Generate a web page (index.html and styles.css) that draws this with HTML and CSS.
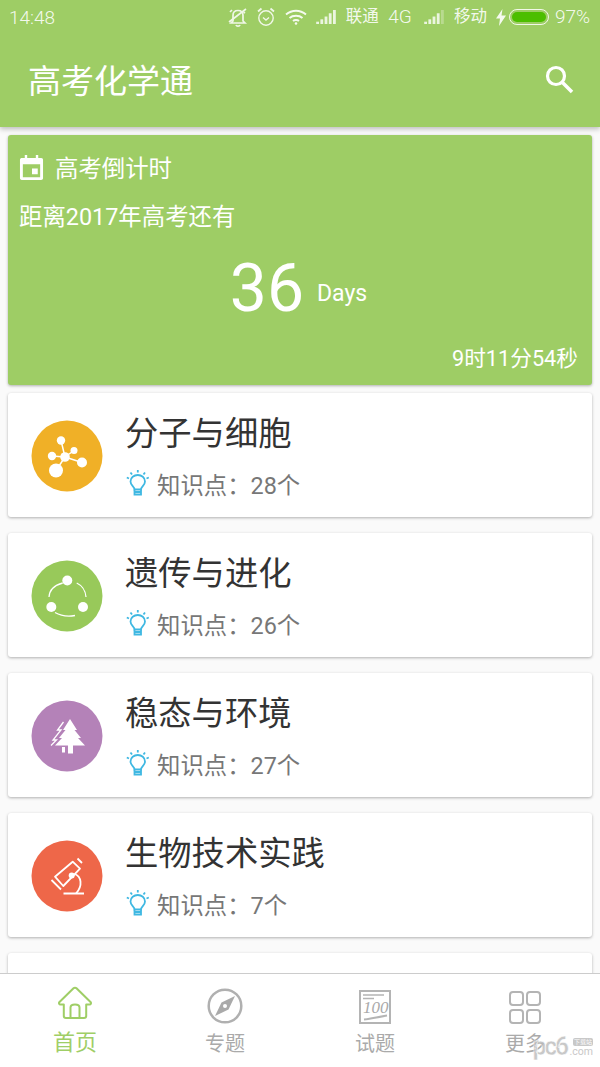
FILE: index.html
```html
<!DOCTYPE html>
<html lang="zh-CN">
<head>
  <meta charset="UTF-8">
  <title>高考化学通</title>
  <meta name="viewport" content="width=device-width, initial-scale=1.0">
  <link rel="stylesheet" href="styles.css">
</head>
<body>

  <div class="app">
    <header class="top">
      <div class="status">
        <span class="clock">14:48</span>
        <div class="status-right">
          <svg class="st-bell" width="20" height="22" viewBox="0 0 20 22" fill="none" stroke="#fff" stroke-width="1.7" opacity=".85"><path d="M5 15V9.500C5 6.500 7 4.500 10 4.500C13 4.500 15 6.500 15 9.500V15L17 17H3Z"/><path d="M8 19C8.500 20.500 11.500 20.500 12 19" /><path d="M1 16L18 3"/><path d="M2 6L4 4M17 7L15.500 6"/></svg>
          <svg class="st-alarm" width="18" height="20" viewBox="0 0 18 20" fill="none" stroke="#fff" stroke-width="1.4" opacity=".85"><circle cx="9" cy="11" r="7.200"/><path d="M6 10.500L9 13L12 10.500"/><path d="M1 4.500L4.500 1.500M17 4.500L13.500 1.500" stroke-width="1.800"/></svg>
          <svg class="st-wifi" width="22" height="16" viewBox="0 0 22 16" fill="none" stroke="#fff" stroke-width="2" opacity=".9"><path d="M1 5.500C7 .5 15 .5 21 5.500"/><path d="M4.500 9C8 6 14 6 17.500 9"/><path d="M8 12C9.500 10.800 12.500 10.800 14 12"/><circle cx="11" cy="14.500" r="1.300" fill="#fff" stroke="none"/></svg>
          <svg class="st-signal" width="20" height="14" viewBox="0 0 21 15" fill="#fff" opacity=".8"><rect x="0" y="12.500" width="3" height="2.500"/><rect x="4.500" y="10" width="3" height="5"/><rect x="9" y="7" width="3" height="8"/><rect x="13.500" y="3.500" width="3" height="11.500"/><rect x="18" y="0" width="3" height="15"/></svg>
          <span class="st-text">联通</span>
          <span class="st-latin">4G</span>
          <svg class="st-signal st-signal-two" width="20" height="14" viewBox="0 0 21 15" fill="#fff" opacity=".8"><rect x="0" y="12.500" width="3" height="2.500"/><rect x="4.500" y="10" width="3" height="5"/><rect x="9" y="7" width="3" height="8"/><rect x="13.500" y="3.500" width="3" height="11.500"/><rect x="18" y="0" width="3" height="15" opacity=".35"/></svg>
          <span class="st-text">移动</span>
          <svg class="st-bolt" width="10" height="17" viewBox="0 0 10 17" fill="#fff" opacity=".9"><path d="M6.500 0L0 9.500H4L3 17L10 6.500H5.500Z"/></svg>
          <div class="battery"><div class="battery-fill"></div></div>
          <span class="st-latin st-pct">97%</span>
        </div>
      </div>
      <div class="toolbar">
        <h1>高考化学通</h1>
        <svg class="search" width="30" height="30" viewBox="0 0 30 30" fill="none" stroke="#fff"><circle cx="12" cy="12" r="8.500" stroke-width="3.200"/><path d="M18.500 18.500L28 28" stroke-width="3.600"/></svg>
      </div>
    </header>

    <main class="content">
      <section class="countdown">
        <div class="cd-head">
          <svg class="cd-icon" width="25" height="26" viewBox="0 0 26 27" fill="#fff"><path d="M6 0H8.500V3H17.500V0H20V3H23C24.500 3 25 4 25 5V24C25 25.500 24 26 23 26H3C1.500 26 1 25 1 24V5C1 3.500 2 3 3 3H6ZM4 9.500V23H22V9.500Z"/><rect x="13.500" y="14" width="6" height="6"/></svg>
          <span>高考倒计时</span>
        </div>
        <p class="cd-line">距离2017年高考还有</p>
        <div class="cd-days">
          <span class="cd-num">36</span>
          <span class="cd-unit">Days</span>
        </div>
        <p class="cd-time">9时11分54秒</p>
      </section>

      <section class="card">
        <svg class="topic" width="72" height="72" viewBox="0 0 72 72">
          <circle cx="36" cy="36" r="35.500" fill="#f0b027"/>
          <g stroke="#fff" stroke-width="1.500"><path d="M34 37L30 20.500M34 37L21 36M34 37L43 30.500M34 37L51 42.500M34 37L25 50.500"/></g>
          <g fill="#fff"><circle cx="34" cy="37" r="4.800"/><circle cx="30" cy="20.500" r="4.200"/><circle cx="21" cy="36" r="4.200"/><circle cx="43" cy="30.500" r="3.500"/><circle cx="51" cy="42.500" r="5"/><circle cx="25" cy="50.500" r="7"/></g>
        </svg>
        <div class="card-body">
          <h3>分子与细胞</h3>
          <p class="points">
            <svg class="bulb" width="24" height="26" viewBox="0 0 24 26" fill="none" stroke="#3fb8e2" stroke-width="1.800"><path d="M8.500 19.500C8.500 16.500 4.500 15.500 4.500 11.500C4.500 7.500 8 5 11.800 5C15.600 5 19 7.500 19 11.500C19 15.500 15 16.500 15 19.500Z"/><path d="M8.500 19.500V24.500H15V19.500M8.500 22H15"/><path d="M.8 7.500L3 8.500M4.500 2.500L6 4.500M11.800 0V2.500M19 2.500L17.500 4.500M22.800 7.500L20.500 8.500"/></svg>
            <span>知识点：28个</span>
          </p>
        </div>
      </section>

      <section class="card">
        <svg class="topic" width="72" height="72" viewBox="0 0 72 72">
          <circle cx="36" cy="36" r="35.500" fill="#98c95a"/>
          <g fill="none" stroke="#fff" stroke-width="1.300"><path d="M31.700 23C24 25 18.500 30 18 37"/><path d="M45.700 23C50 25 54.500 30 55 37"/><path d="M24 52.500C30 56 38 56.500 44 55.500"/></g>
          <g fill="#fff"><circle cx="36.300" cy="20.500" r="5"/><circle cx="20.300" cy="47" r="5"/><circle cx="52" cy="47" r="5"/></g>
        </svg>
        <div class="card-body">
          <h3>遗传与进化</h3>
          <p class="points">
            <svg class="bulb" width="24" height="26" viewBox="0 0 24 26" fill="none" stroke="#3fb8e2" stroke-width="1.800"><path d="M8.500 19.500C8.500 16.500 4.500 15.500 4.500 11.500C4.500 7.500 8 5 11.800 5C15.600 5 19 7.500 19 11.500C19 15.500 15 16.500 15 19.500Z"/><path d="M8.500 19.500V24.500H15V19.500M8.500 22H15"/><path d="M.8 7.500L3 8.500M4.500 2.500L6 4.500M11.800 0V2.500M19 2.500L17.500 4.500M22.800 7.500L20.500 8.500"/></svg>
            <span>知识点：26个</span>
          </p>
        </div>
      </section>

      <section class="card">
        <svg class="topic" width="72" height="72" viewBox="0 0 72 72">
          <circle cx="36" cy="36" r="35.500" fill="#b482b8"/>
          <path fill="#fff" d="M39 19L46 30H43.500L50 38H47L54 45.500H24L31 38H28L34.500 30H32Z"/>
          <rect x="37" y="45" width="5" height="8.500" fill="#fff"/>
          <rect x="31" y="47" width="3" height="5.500" fill="#fff"/>
          <path fill="none" stroke="#fff" stroke-width="1.300" d="M32.500 22L26.500 30H30L22 40H25.500L20 45.500"/>
        </svg>
        <div class="card-body">
          <h3>稳态与环境</h3>
          <p class="points">
            <svg class="bulb" width="24" height="26" viewBox="0 0 24 26" fill="none" stroke="#3fb8e2" stroke-width="1.800"><path d="M8.500 19.500C8.500 16.500 4.500 15.500 4.500 11.500C4.500 7.500 8 5 11.800 5C15.600 5 19 7.500 19 11.500C19 15.500 15 16.500 15 19.500Z"/><path d="M8.500 19.500V24.500H15V19.500M8.500 22H15"/><path d="M.8 7.500L3 8.500M4.500 2.500L6 4.500M11.800 0V2.500M19 2.500L17.500 4.500M22.800 7.500L20.500 8.500"/></svg>
            <span>知识点：27个</span>
          </p>
        </div>
      </section>

      <section class="card">
        <svg class="topic" width="72" height="72" viewBox="0 0 72 72">
          <circle cx="36" cy="36" r="35.500" fill="#ee6749"/>
          <g fill="none" stroke="#fff" stroke-width="1.800" stroke-linejoin="round"><path d="M24 36.700L41.700 21.700L49 28.700L32.300 46Z"/><path d="M46.500 18.500L51 23M20.500 40L30 49.500M32.500 53.500H53"/><path d="M43.500 34C50.500 36 52 46 45 53.500"/></g>
          <circle cx="40.700" cy="35.500" r="3" fill="#fff"/>
        </svg>
        <div class="card-body">
          <h3>生物技术实践</h3>
          <p class="points">
            <svg class="bulb" width="24" height="26" viewBox="0 0 24 26" fill="none" stroke="#3fb8e2" stroke-width="1.800"><path d="M8.500 19.500C8.500 16.500 4.500 15.500 4.500 11.500C4.500 7.500 8 5 11.800 5C15.600 5 19 7.500 19 11.500C19 15.500 15 16.500 15 19.500Z"/><path d="M8.500 19.500V24.500H15V19.500M8.500 22H15"/><path d="M.8 7.500L3 8.500M4.500 2.500L6 4.500M11.800 0V2.500M19 2.500L17.500 4.500M22.800 7.500L20.500 8.500"/></svg>
            <span>知识点：7个</span>
          </p>
        </div>
      </section>

      <section class="card"></section>
    </main>

    <nav class="tabs">
      <div class="tab active">
        <svg width="36" height="36" viewBox="0 0 36 36" fill="none" stroke="#9fce66" stroke-width="2" stroke-linejoin="round"><path d="M13.500 32V21.500C13.500 17.500 22.500 17.500 22.500 21.500V32H9C7.500 32 6.800 31 6.800 30V18.500H3.500C2 18.500 1.600 17 2.500 16L16.500 2.300C17.300 1.500 18.700 1.500 19.500 2.300L33.500 16C34.400 17 34 18.500 32.500 18.500H29.200V30C29.200 31 28.500 32 27 32H22.500"/></svg>
        <span>首页</span>
      </div>
      <div class="tab">
        <svg width="36" height="36" viewBox="0 0 36 36"><circle cx="18" cy="18" r="16.300" fill="none" stroke="#b0b0b0" stroke-width="2.500"/><path fill="#aaa" d="M28 8L21.500 21.500L8 28L14.500 14.500Z"/><circle cx="18" cy="18" r="2" fill="#fff"/></svg>
        <span>专题</span>
      </div>
      <div class="tab">
        <svg width="34" height="36" viewBox="0 0 34 36" fill="none" stroke="#b4b4b4"><rect x="2" y="3" width="30" height="32" stroke-width="2"/><path d="M5 7H26M5 10.500H16" stroke-width="1.500"/><text class="hundred" x="5" y="25">100</text><path d="M6 31.500C13 30.500 21 29 29 27.500" stroke-width="1.800"/></svg>
        <span>试题</span>
      </div>
      <div class="tab">
        <svg width="34" height="36" viewBox="0 0 34 36" fill="none" stroke="#b4b4b4" stroke-width="2"><rect x="2" y="4" width="13" height="13" rx="3"/><rect x="19" y="4" width="13" height="13" rx="3"/><rect x="2" y="22" width="13" height="13" rx="3"/><rect x="19" y="22" width="13" height="13" rx="3"/></svg>
        <span>更多</span>
      </div>
    </nav>

    <div class="watermark">
      <span class="wm-logo">pc6</span>
      <div class="wm-side">
        <span class="wm-badge">下载站</span>
        <span class="wm-com">.com</span>
      </div>
    </div>
  </div>

</body>
</html>
```

FILE: styles.css
```css
* {
  box-sizing: border-box;
}

body {
  margin: 0;
  font-family: Roboto, "Noto Sans CJK SC", sans-serif;
  background-color: #fafafa;
  color: #333;
}

h1, h3, p {
  margin: 0;
  font-weight: normal;
}

.app {
  position: relative;
  display: flex;
  flex-direction: column;
  height: 1067px;
  overflow: hidden;
}

/* header */
.top {
  flex: none;
  height: 127px;
  background-color: #9ecd65;
  box-shadow: 0 2px 5px rgba(0,0,0,0.25);
  color: #fff;
  position: relative;
  z-index: 1;
}

.status {
  display: flex;
  justify-content: space-between;
  align-items: center;
  height: 34px;
  padding: 0 10px 0 9px;
  color: rgba(255,255,255,0.9);
}

.clock {
  font-size: 19px;
  font-weight: 300;
}

.status-right {
  display: flex;
  align-items: center;
  gap: 9.5px;
}

.st-text {
  font-size: 16.5px;
  line-height: 20px;
}

.st-latin {
  font-size: 19px;
  font-weight: 300;
  line-height: 20px;
}

.st-signal-two {
  margin-left: 3px;
}

.st-bolt {
  margin-right: -6.5px;
}

.st-pct {
  margin-left: -4px;
}

.battery {
  width: 40px;
  height: 16px;
  padding: 2px;
  border: 1px solid rgba(255,255,255,0.85);
  border-radius: 8px;
}

.battery-fill {
  height: 100%;
  border-radius: 6px;
  background-color: #4cbe00;
}

.toolbar {
  display: flex;
  justify-content: space-between;
  align-items: center;
  height: 93px;
  padding: 0 26px 0 28px;
}

.toolbar h1 {
  font-size: 33px;
  margin-bottom: 4px;
}

.search {
  margin-top: -3px;
}

/* content */
.content {
  flex: 1;
  min-height: 0;
  overflow: hidden;
  padding: 8px;
}

.countdown {
  height: 250px;
  margin-bottom: 8px;
  padding: 17px 14px 10px 11px;
  background-color: #9ecd65;
  border-radius: 3px;
  box-shadow: 0 1px 3px rgba(0,0,0,0.3);
  color: #fff;
  font-size: 23.4px;
}

.cd-head {
  display: flex;
  align-items: center;
  gap: 11px;
  height: 34px;
  line-height: 34px;
}

.cd-icon {
  margin-top: -3px;
}

.cd-line {
  margin-top: 14px;
  line-height: 34px;
}

.cd-days {
  display: flex;
  justify-content: center;
  align-items: center;
  gap: 13px;
  height: 107px;
}

.cd-num {
  margin-top: 2px;
  font-size: 66px;
  line-height: 1;
}

.cd-unit {
  font-size: 23px;
  margin-top: 12px;
}

.cd-time {
  margin-top: 1px;
  line-height: 34px;
  font-size: 21.7px;
  text-align: right;
}

.card {
  display: flex;
  align-items: center;
  gap: 22px;
  height: 124px;
  margin-bottom: 16px;
  padding-left: 23px;
  background-color: #fff;
  border-radius: 3px;
  box-shadow: 0 1px 3px rgba(0,0,0,0.3);
}

.topic {
  flex: none;
  margin-top: 1px;
}

.card-body {
  flex: 1;
}

.card-body h3 {
  margin-top: 4px;
  font-size: 33.3px;
  line-height: 40px;
  color: #333;
}

.points {
  display: flex;
  align-items: center;
  gap: 7px;
  margin-top: 14px;
  height: 32px;
  font-size: 23.4px;
  color: #777;
}

.bulb {
  flex: none;
  margin-top: -2px;
  margin-left: 1px;
}

/* bottom tabs */
.tabs {
  flex: none;
  display: grid;
  grid-template-columns: repeat(4, 1fr);
  height: 94px;
  background-color: #fff;
  border-top: 1px solid #ccc;
  position: relative;
  z-index: 1;
}

.tab {
  display: flex;
  flex-direction: column;
  align-items: center;
  padding-top: 14px;
  font-size: 20px;
  color: #aaa;
}

.tab svg {
  display: block;
}

.tab span {
  margin-top: 5px;
  line-height: 30px;
}

.tab.active {
  color: #9fce66;
}

.tab.active svg {
  margin-top: -2px;
}

.tab.active span {
  margin-top: 6px;
  font-size: 22px;
}

.hundred {
  font-family: "Liberation Serif", serif;
  font-style: italic;
  font-size: 17px;
  fill: #aaa;
  stroke: none;
}

/* watermark over the tab bar */
.watermark {
  position: absolute;
  right: 7px;
  bottom: 7px;
  z-index: 2;
  display: flex;
  align-items: flex-end;
  gap: 3px;
  opacity: 0.8;
  color: #bbb;
}

.wm-logo {
  font-size: 25px;
  font-weight: 700;
  line-height: 26px;
  letter-spacing: -2.5px;
  -webkit-text-stroke: 0.5px #fff;
}

.wm-side {
  display: flex;
  flex-direction: column;
  align-items: flex-end;
  margin-bottom: 2px;
}

.wm-badge {
  padding: 0 1px;
  background-color: #bbb;
  border-radius: 2px;
  color: #fff;
  font-size: 6px;
  line-height: 8px;
}

.wm-com {
  font-size: 10.5px;
  line-height: 12px;
}
```
